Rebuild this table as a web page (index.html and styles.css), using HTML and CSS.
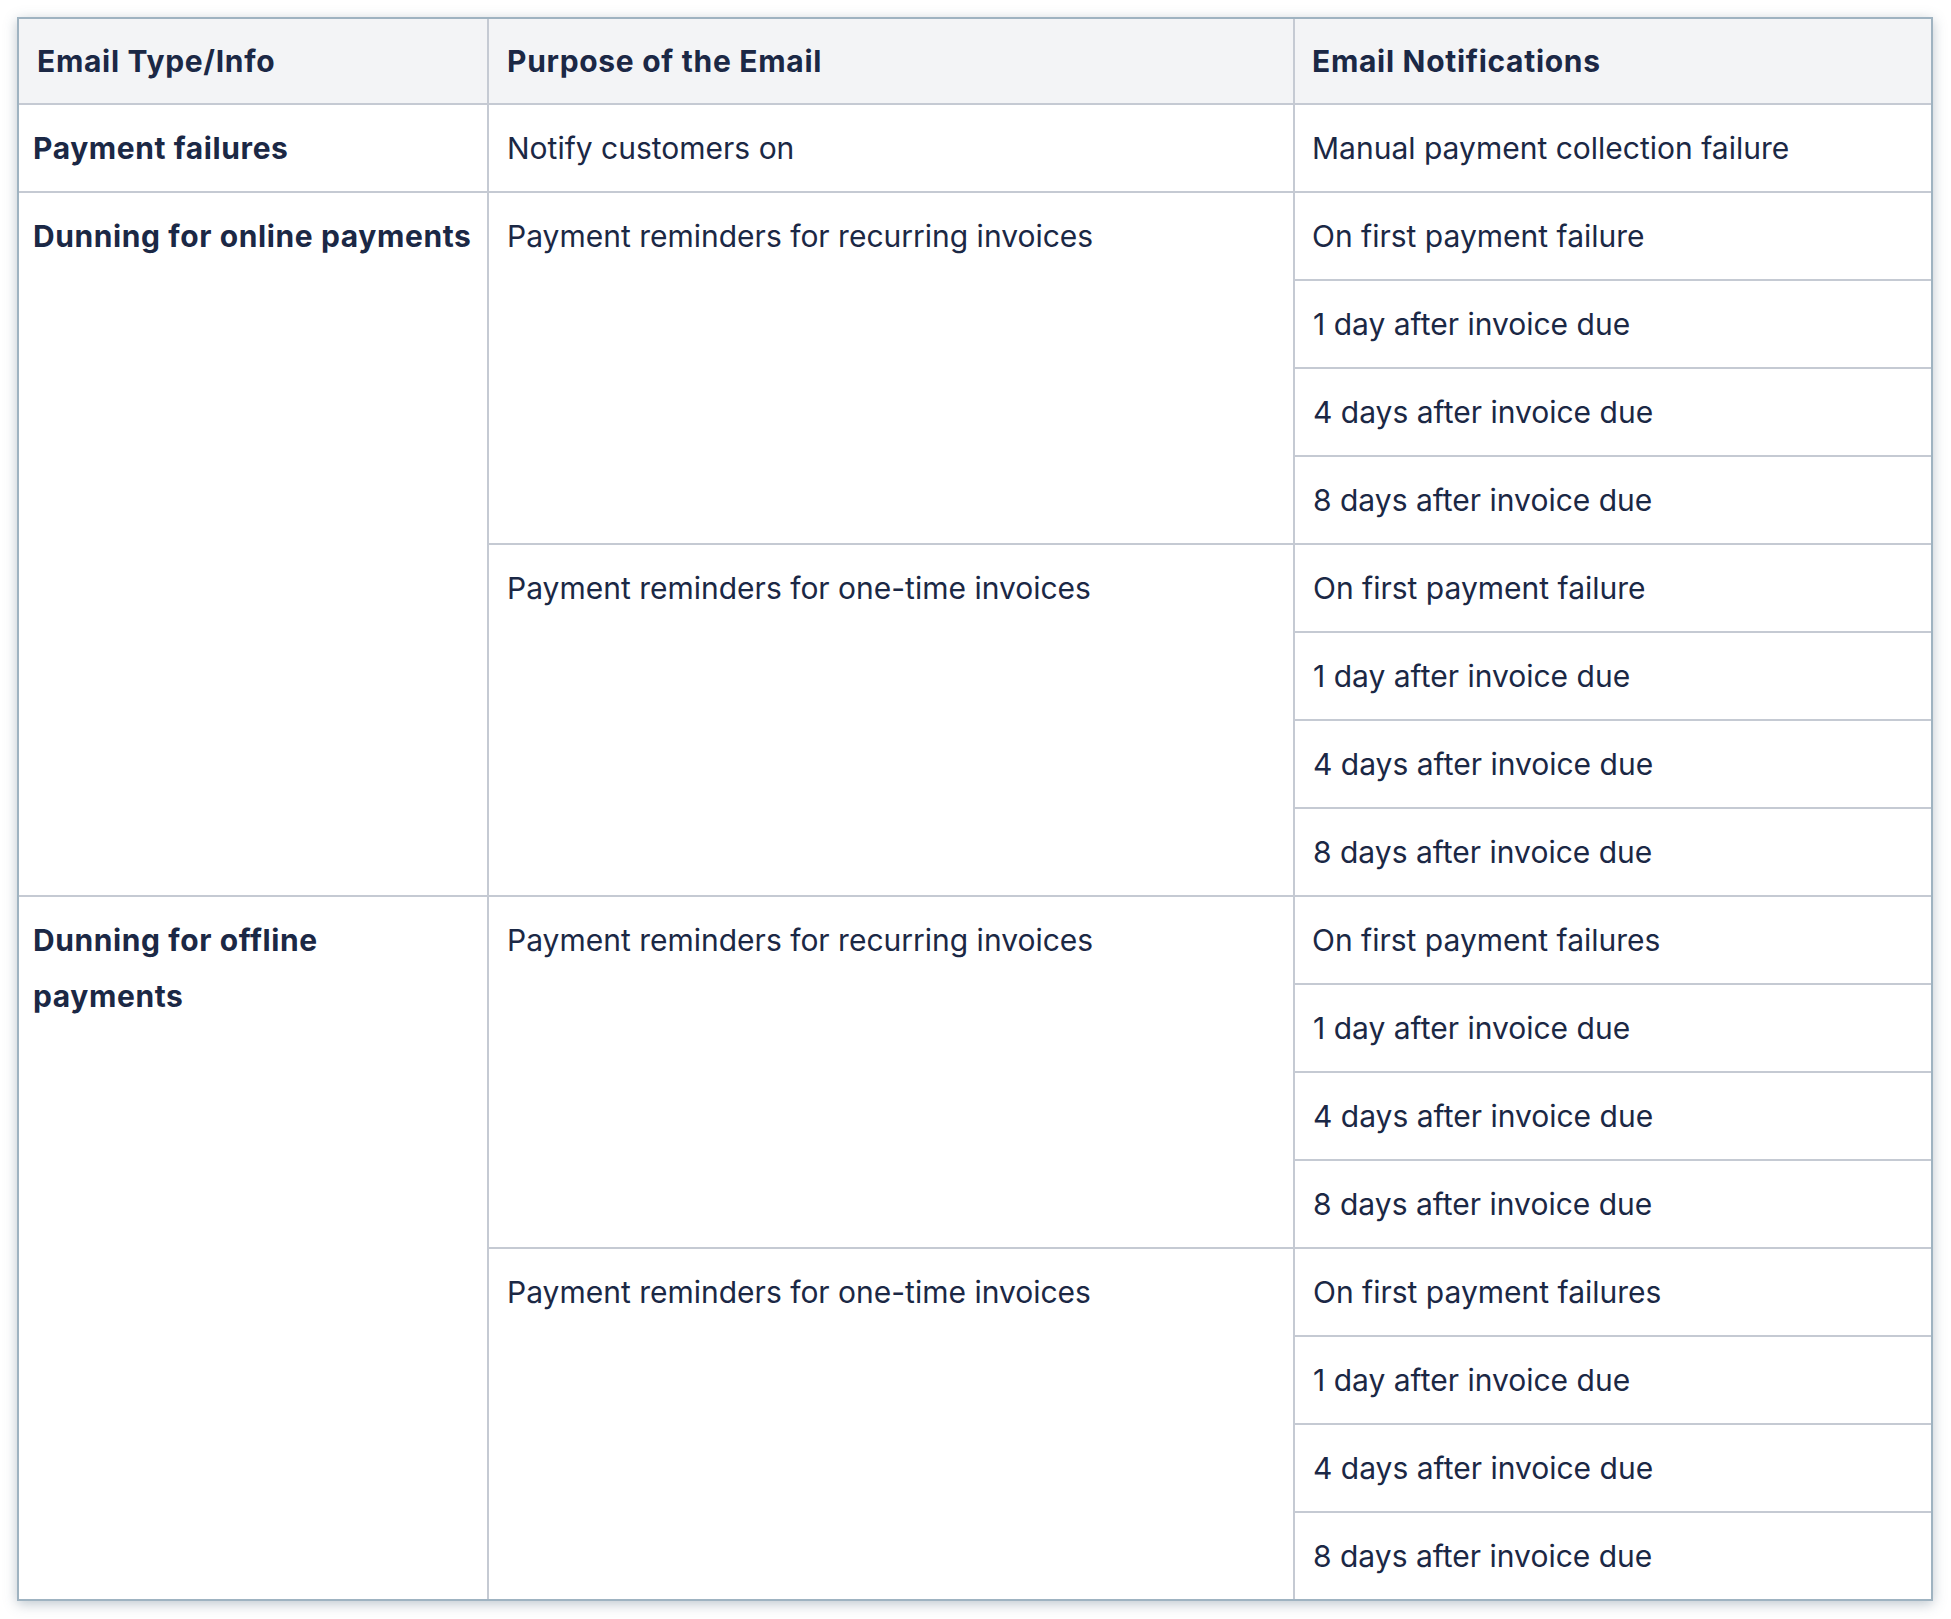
FILE: index.html
```html
<!DOCTYPE html>
<html>
<head>
<meta charset="utf-8">
<link rel="stylesheet" href="styles.css">
</head>
<body>
<div class="frame">
<table class="grid">
<colgroup><col class="c1"><col class="c2"><col class="c3"></colgroup>
<thead>
<tr><th>Email Type/Info</th><th>Purpose of the Email</th><th>Email Notifications</th></tr>
</thead>
<tbody>
<tr><td class="type">Payment failures</td><td>Notify customers on</td><td>Manual payment collection failure</td></tr>
<tr><td class="type" rowspan="8">Dunning for online payments</td><td rowspan="4">Payment reminders for recurring invoices</td><td>On first payment failure</td></tr>
<tr><td>1 day after invoice due</td></tr>
<tr><td>4 days after invoice due</td></tr>
<tr><td>8 days after invoice due</td></tr>
<tr><td rowspan="4">Payment reminders for one-time invoices</td><td>On first payment failure</td></tr>
<tr><td>1 day after invoice due</td></tr>
<tr><td>4 days after invoice due</td></tr>
<tr><td>8 days after invoice due</td></tr>
<tr><td class="type" rowspan="8">Dunning for offline payments</td><td rowspan="4">Payment reminders for recurring invoices</td><td>On first payment failures</td></tr>
<tr><td>1 day after invoice due</td></tr>
<tr><td>4 days after invoice due</td></tr>
<tr><td>8 days after invoice due</td></tr>
<tr><td rowspan="4">Payment reminders for one-time invoices</td><td>On first payment failures</td></tr>
<tr><td>1 day after invoice due</td></tr>
<tr><td>4 days after invoice due</td></tr>
<tr><td>8 days after invoice due</td></tr>
</tbody>
</table>
</div>
</body>
</html>
```
FILE: styles.css
```css
html, body {
  margin: 0;
  padding: 0;
  background: #ffffff;
}
body {
  font-family: Inter, "Noto Sans", "Liberation Sans", sans-serif;
  color: #1b2845;
}
.frame {
  margin: 17px;
  width: 1912px;
  border: 2px solid #9fb3c1;
  box-shadow: 0 3px 12px rgba(70, 95, 115, 0.35);
  background: #fff;
}
.grid {
  width: 100%;
  border-collapse: collapse;
  border-style: hidden;
  table-layout: fixed;
}
.c1 { width: 469px; }
.c2 { width: 806px; }
.c3 { width: 637px; }
.grid th,
.grid td {
  border: 2px solid #c5cad3;
  font-size: 30px;
  line-height: 56px;
  text-align: left;
  vertical-align: top;
  padding: 15px 18px 15px 18px;
}
.grid td:nth-child(3), .grid th:nth-child(3) {
  padding-left: 17px;
}
.grid th {
  background: #f3f4f6;
  font-weight: 700;
  letter-spacing: 0.7px;
  padding-top: 14px;
  padding-bottom: 14px;
}
.grid td {
  font-weight: 400;
}
.grid td.type {
  font-weight: 700;
  letter-spacing: 0.6px;
  padding-left: 14px;
  padding-right: 14px;
}
```
